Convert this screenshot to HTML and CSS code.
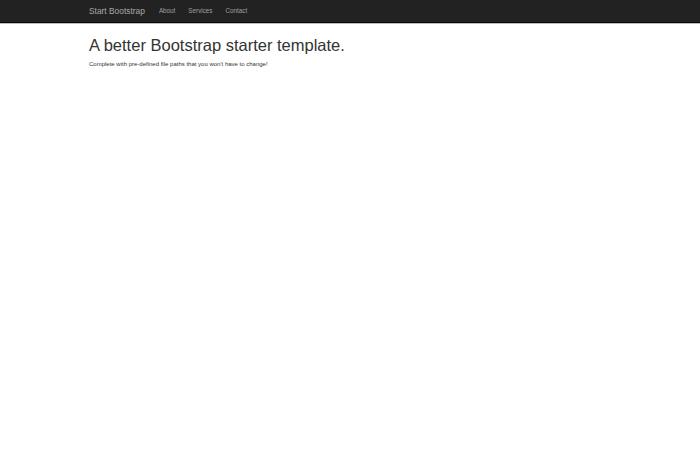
FILE: index.html
```html
<!DOCTYPE html>
<html lang="en">
  <head>
    <meta charset="UTF-8" />
    <meta name="viewport" content="width=device-width, initial-scale=1.0" />
    <title>Starter Template</title>
    <link rel="stylesheet" href="styles.css">
  </head>
  <body>
    <div class="navbar">
      <div class="container nav-inner">
        <a class="brand" href="#">Start Bootstrap</a>
        <ul class="nav">
          <li><a href="#about">About</a></li>
          <li><a href="#services">Services</a></li>
          <li><a href="#contact">Contact</a></li>
        </ul>
      </div>
    </div>

    <div class="container">
      <h1>A better Bootstrap starter template.</h1>
      <p>Complete with pre-defined file paths that you won't have to change!</p>
    </div>
  </body>
</html>
```

FILE: styles.css
```css
body {
  margin: 0;
  font-family: "Liberation Sans", Arial, sans-serif;
  color: #333;
  background: #fff;
}
.container {
  padding-left: 89px;
}
.navbar {
  height: 22px;
  background-color: #222;
  border-bottom: 1px solid #080808;
  box-shadow: 0 1px 0 #bbb;
}
.nav-inner {
  display: flex;
  align-items: center;
  height: 22px;
}
.brand {
  font-size: 8.4px;
  line-height: 22px;
  color: #a8a8a8;
  text-decoration: none;
  margin-right: 14px;
}
.nav {
  display: flex;
  gap: 13px;
  list-style: none;
  margin: 0;
  padding: 0;
}
.nav a {
  display: block;
  font-size: 6.3px;
  line-height: 22px;
  color: #a0a0a0;
  text-decoration: none;
}
h1 {
  font-size: 16.5px;
  font-weight: normal;
  margin: 13px 0 6px;
}
p {
  font-size: 6px;
  margin: 0;
}
```
